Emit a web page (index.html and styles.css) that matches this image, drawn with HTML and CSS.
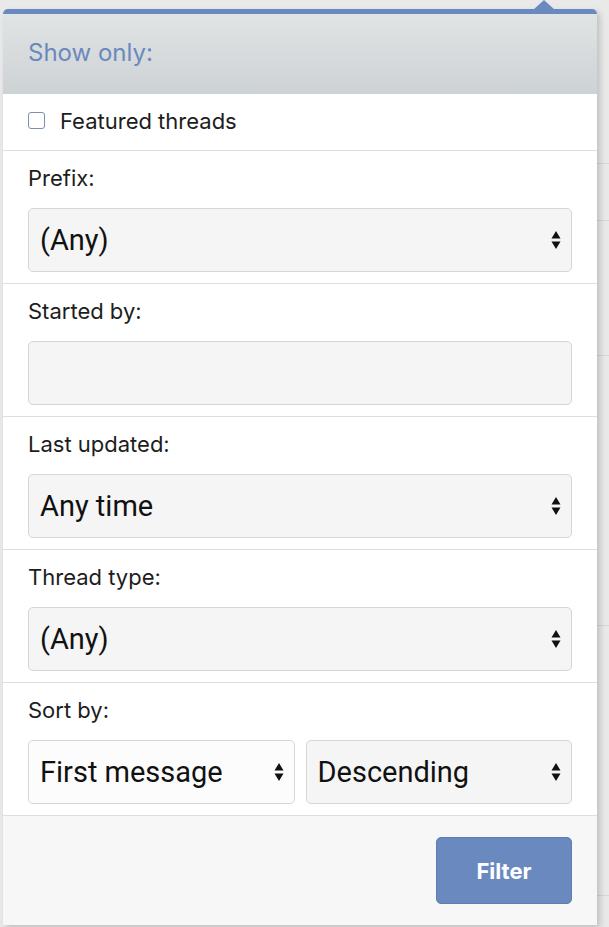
FILE: index.html
```html
<!DOCTYPE html>
<html lang="en">
<head>
<meta charset="utf-8">
<title>Show only</title>
<link rel="stylesheet" href="styles.css">
</head>
<body>
<div class="backdrop">
  <div class="popup">
    <div class="popup-head">Show only:</div>
    <label class="check-row">
      <span class="checkbox"></span>
      <span class="check-text">Featured threads</span>
    </label>
    <div class="section">
      <div class="label">Prefix:</div>
      <div class="select"><span class="select-text">(Any)</span>
        <svg class="arrows" width="10" height="20" viewBox="0 0 10 20"><path d="M5 1 L9.5 8.5 H0.5 Z M5 19 L9.5 11.5 H0.5 Z" fill="#111"/></svg>
      </div>
    </div>
    <div class="section">
      <div class="label">Started by:</div>
      <div class="input"></div>
    </div>
    <div class="section">
      <div class="label">Last updated:</div>
      <div class="select"><span class="select-text">Any time</span>
        <svg class="arrows" width="10" height="20" viewBox="0 0 10 20"><path d="M5 1 L9.5 8.5 H0.5 Z M5 19 L9.5 11.5 H0.5 Z" fill="#111"/></svg>
      </div>
    </div>
    <div class="section">
      <div class="label">Thread type:</div>
      <div class="select"><span class="select-text">(Any)</span>
        <svg class="arrows" width="10" height="20" viewBox="0 0 10 20"><path d="M5 1 L9.5 8.5 H0.5 Z M5 19 L9.5 11.5 H0.5 Z" fill="#111"/></svg>
      </div>
    </div>
    <div class="section">
      <div class="label">Sort by:</div>
      <div class="pair">
        <div class="select select-light"><span class="select-text">First message</span>
          <svg class="arrows" width="10" height="20" viewBox="0 0 10 20"><path d="M5 1 L9.5 8.5 H0.5 Z M5 19 L9.5 11.5 H0.5 Z" fill="#111"/></svg>
        </div>
        <div class="select"><span class="select-text">Descending</span>
          <svg class="arrows" width="10" height="20" viewBox="0 0 10 20"><path d="M5 1 L9.5 8.5 H0.5 Z M5 19 L9.5 11.5 H0.5 Z" fill="#111"/></svg>
        </div>
      </div>
    </div>
    <div class="footer">
      <button class="btn">Filter</button>
    </div>
  </div>
</div>
</body>
</html>
```
FILE: styles.css
```css
html, body {
  margin: 0;
  padding: 0;
}
body {
  background: #e9e9e9;
  font-family: Inter, "Noto Sans", sans-serif;
  color: #1d1d1d;
  width: 609px;
  height: 927px;
  overflow: hidden;
}
.backdrop {
  padding: 9px 12px 0 3px;
  background:
    linear-gradient(#d6d6d6, #d6d6d6) right 0 top 163px / 12px 1px no-repeat,
    linear-gradient(#d6d6d6, #d6d6d6) right 0 top 220px / 12px 1px no-repeat,
    linear-gradient(#d6d6d6, #d6d6d6) right 0 top 355px / 12px 1px no-repeat,
    linear-gradient(#d6d6d6, #d6d6d6) right 0 top 625px / 12px 1px no-repeat,
    linear-gradient(#d6d6d6, #d6d6d6) right 0 top 895px / 12px 1px no-repeat;
  height: 927px;
  box-sizing: border-box;
}
.popup {
  position: relative;
  width: 594px;
  border-top: 5px solid #6a8abf;
  border-radius: 5px 5px 0 0;
  background: #fff;
  box-shadow: 3px 3px 6px rgba(0, 0, 0, 0.18);
}
.popup::before {
  content: "";
  position: absolute;
  top: -14px;
  left: 530px;
  border-left: 11px solid transparent;
  border-right: 11px solid transparent;
  border-bottom: 10px solid #6a8abf;
}
.popup-head {
  height: 80px;
  box-sizing: border-box;
  padding: 24px 25px 0;
  font-size: 24px;
  line-height: 30px;
  color: #6a89bd;
  background: linear-gradient(#e1e4e5, #cdd2d4);
}
.check-row {
  display: flex;
  align-items: center;
  height: 57px;
  box-sizing: border-box;
  padding: 0 25px 3px;
  border-bottom: 1px solid #dedede;
  gap: 15px;
}
.checkbox {
  width: 15px;
  height: 15px;
  border: 1.5px solid #7c8fad;
  border-radius: 3px;
  background: #fff;
}
.check-text {
  font-size: 22px;
  line-height: 28px;
}
.section {
  padding: 12px 25px 11px;
  border-bottom: 1px solid #dedede;
}
.label {
  font-size: 22px;
  line-height: 30px;
  margin-bottom: 15px;
  color: #1d1d1d;
}
.select, .input {
  height: 64px;
  box-sizing: border-box;
  border: 1px solid #d6d6d6;
  border-radius: 5px;
  background: #f5f5f5;
}
.select {
  display: flex;
  align-items: center;
  justify-content: space-between;
  padding: 0 10px 0 11px;
  font-family: Roboto, "Liberation Sans", sans-serif;
  font-size: 29px;
  color: #111;
}
.select-light {
  background: #fcfcfc;
}
.pair {
  display: grid;
  grid-template-columns: 1fr 1fr;
  gap: 11px;
}
.footer {
  display: flex;
  justify-content: flex-end;
  height: 109px;
  box-sizing: border-box;
  padding: 21px 25px 0;
  background: #f7f7f7;
}
.btn {
  width: 136px;
  height: 67px;
  border: 1px solid #5e7eb3;
  border-radius: 5px;
  background: #6a8abf;
  color: #fff;
  font-family: Inter, "Noto Sans", sans-serif;
  font-weight: 700;
  font-size: 22px;
}
```
